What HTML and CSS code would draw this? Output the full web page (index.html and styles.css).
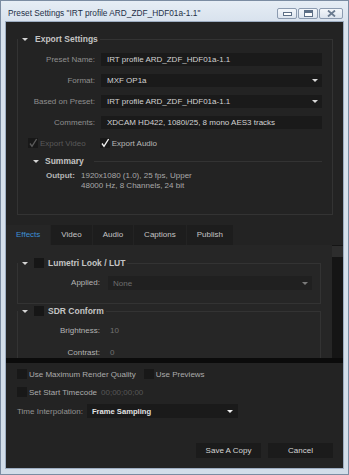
FILE: index.html
```html
<!DOCTYPE html>
<html>
<head>
<meta charset="utf-8">
<title>Preset Settings</title>
<link rel="stylesheet" href="styles.css">
</head>
<body>
<div class="window">
  <div class="titlebar">
    <span class="title">Preset Settings "IRT profile ARD_ZDF_HDF01a-1.1"</span>
    <div class="caption-buttons">
      <span class="cbtn cmin"><svg width="9" height="5" viewBox="0 0 9 5"><rect x="0.5" y="1.5" width="8" height="3" fill="#fdfdfd" stroke="#5d6f86"/></svg></span>
      <span class="cbtn cmax"><svg width="9" height="7" viewBox="0 0 9 7"><rect x="0.5" y="0.5" width="8" height="6" fill="#fdfdfd" stroke="#5d6f86"/><rect x="1" y="1" width="7" height="2" fill="#5d6f86"/></svg></span>
      <span class="cbtn cclose"><svg width="9" height="7" viewBox="0 0 9 7"><path d="M1 0.5 L8 6.5 M8 0.5 L1 6.5" stroke="#6a7b90" stroke-width="1.8"/></svg></span>
    </div>
  </div>

  <div class="client">
    <fieldset class="group export">
      <legend class="legend"><span class="tri"></span><span class="gtitle">Export Settings</span></legend>
      <div class="form">
        <span class="lbl">Preset Name:</span>
        <div class="field">IRT profile ARD_ZDF_HDF01a-1.1</div>
        <span class="lbl">Format:</span>
        <div class="field select"><span>MXF OP1a</span><span class="dd"></span></div>
        <span class="lbl">Based on Preset:</span>
        <div class="field select"><span>IRT profile ARD_ZDF_HDF01a-1.1</span><span class="dd"></span></div>
        <span class="lbl">Comments:</span>
        <div class="field">XDCAM HD422, 1080i/25, 8 mono AES3 tracks</div>
      </div>
      <div class="checks">
        <span class="cb"><svg width="10" height="10" viewBox="0 0 10 10"><path d="M2 5.5 L4 8.3 L8.6 1" fill="none" stroke="#5a5a5a" stroke-width="1.4"/></svg></span>
        <span class="ctext disabled">Export Video</span>
        <span class="cb cb-audio"><svg width="10" height="10" viewBox="0 0 10 10"><path d="M2 5.5 L4 8.3 L8.6 1" fill="none" stroke="#f0f0f0" stroke-width="1.4"/></svg></span>
        <span class="ctext">Export Audio</span>
      </div>
      <div class="summary-head">
        <span class="tri"></span><span class="gtitle">Summary</span><span class="rule"></span>
      </div>
      <div class="output">
        <span class="olabel">Output:</span>
        <div class="ovalue">1920x1080 (1.0), 25 fps, Upper<br>48000 Hz, 8 Channels, 24 bit</div>
      </div>
    </fieldset>

    <div class="tabs">
      <span class="tab active">Effects</span>
      <span class="tab">Video</span>
      <span class="tab">Audio</span>
      <span class="tab">Captions</span>
      <span class="tab">Publish</span>
    </div>

    <div class="tabbody">
      <div class="scrollarea">
        <fieldset class="group fx">
          <legend class="legend fxlegend"><span class="tri"></span><span class="cb fxcb"></span><span class="gtitle">Lumetri Look / LUT</span></legend>
          <div class="fxform">
            <span class="fxlbl">Applied:</span>
            <div class="fxselect"><span>None</span><span class="dd dim"></span></div>
          </div>
        </fieldset>
        <fieldset class="group fx sdr">
          <legend class="legend fxlegend"><span class="tri"></span><span class="cb fxcb"></span><span class="gtitle">SDR Conform</span></legend>
          <div class="fxform">
            <span class="fxlbl">Brightness:</span>
            <span class="fxval">10</span>
            <span class="fxlbl">Contrast:</span>
            <span class="fxval">0</span>
          </div>
        </fieldset>
      </div>
      <div class="scrollbar"><div class="thumb"></div></div>
    </div>

    <div class="splitter"></div>

    <div class="bottom">
      <div class="opt">
        <span class="cb"></span><span class="otext">Use Maximum Render Quality</span>
        <span class="cb cb-prev"></span><span class="otext">Use Previews</span>
      </div>
      <div class="opt">
        <span class="cb"></span><span class="otext">Set Start Timecode</span>
        <span class="tc">00;00;00;00</span>
      </div>
      <div class="interp">
        <span class="ilabel">Time Interpolation:</span>
        <div class="iselect"><span>Frame Sampling</span><span class="dd"></span></div>
      </div>
      <div class="buttons">
        <span class="btn">Save A Copy</span>
        <span class="btn">Cancel</span>
      </div>
    </div>
  </div>
</div>
</body>
</html>
```

FILE: styles.css
```css
* { box-sizing: border-box; }
html, body { margin: 0; padding: 0; }
body {
  width: 349px;
  height: 475px;
  overflow: hidden;
  font-family: "Liberation Sans", Arial, sans-serif;
  font-size: 8px;
  background: #d5e0ec;
}
.window {
  width: 349px;
  height: 475px;
  border: 1px solid #7b8ca2;
  background: linear-gradient(to bottom, #e6edf5 0, #d8e2ed 21px, #d2dde9 100%);
  display: flex;
  flex-direction: column;
}
.titlebar {
  height: 21px;
  flex: none;
  display: flex;
  align-items: flex-start;
  padding-left: 7px;
}
.title {
  flex: 1;
  margin-top: 6px;
  font-family: "Liberation Sans", Arial, sans-serif;
  font-size: 8.3px;
  line-height: 12px;
  color: #1e3047;
  white-space: nowrap;
}
.caption-buttons {
  display: flex;
  margin-top: 7px;
  margin-right: 5px;
  gap: 1px;
}
.cbtn {
  height: 11px;
  width: 20px;
  border: 1px solid #8c9bb0;
  border-radius: 2px;
  background: linear-gradient(to bottom, #f4f7fb, #dbe3ed);
  display: flex;
  align-items: center;
  justify-content: center;
}
.cclose { width: 24px; }

.client {
  flex: 1;
  margin: 0 5px 6px 5px;
  background: #232323;
  box-shadow: 0 0 0 1px #9dadc1;
  display: flex;
  flex-direction: column;
  padding-top: 11px;
  overflow: hidden;
}

/* group boxes */
.group {
  border: 1px solid #333333;
  margin: 0;
  padding: 0;
  min-width: 0;
}
.export {
  margin: 0 10px 0 11px;
  padding: 0 0 23px 0;
}
.legend {
  padding: 0 2px 0 4px;
  height: 12px;
  line-height: 12px;
  white-space: nowrap;
}
.tri {
  display: inline-block;
  width: 0;
  height: 0;
  border-left: 3px solid transparent;
  border-right: 3px solid transparent;
  border-top: 3px solid #d4d4d4;
  vertical-align: middle;
  margin-right: 7px;
}
.gtitle {
  font-weight: bold;
  font-size: 8.5px;
  color: #c4c4c4;
  vertical-align: middle;
}

.form {
  display: grid;
  grid-template-columns: 77px 221px;
  column-gap: 6px;
  row-gap: 8px;
  margin-top: 8px;
}
.lbl {
  text-align: right;
  color: #8f8f8f;
  line-height: 13px;
  white-space: nowrap;
}
.field {
  height: 13px;
  line-height: 13px;
  background: #1a1a1a;
  color: #d2d2d2;
  padding-left: 6px;
  white-space: nowrap;
}
.select {
  display: flex;
  align-items: center;
  justify-content: space-between;
  padding-right: 4px;
}
.dd {
  width: 0;
  height: 0;
  border-left: 3px solid transparent;
  border-right: 3px solid transparent;
  border-top: 3px solid #d8d8d8;
}
.dd.dim { border-top-color: #7a7a7a; }

.checks {
  display: flex;
  align-items: center;
  height: 12px;
  margin-top: 8px;
  padding-left: 10px;
}
.cb {
  width: 10px;
  height: 10px;
  flex: none;
  background: #181818;
  display: inline-block;
}
.cb svg { display: block; }
.ctext {
  margin-left: 2px;
  color: #b8b8b8;
}
.ctext.disabled { color: #595959; }
.cb-audio { margin-left: 14px; }

.summary-head {
  display: flex;
  align-items: center;
  height: 12px;
  margin-top: 6px;
  padding-left: 15px;
  margin-right: 10px;
}
.summary-head .tri { margin-right: 6px; }
.rule {
  flex: 1;
  height: 1px;
  background: #333333;
  margin-left: 10px;
}
.output {
  display: flex;
  margin-top: 4px;
  padding-left: 28px;
  line-height: 10px;
}
.olabel {
  font-weight: bold;
  color: #b4b4b4;
  width: 35px;
  flex: none;
}
.ovalue { color: #a8a8a8; }

/* tabs */
.tabs {
  display: flex;
  height: 20px;
  margin-top: 10px;
  gap: 1px;
  flex: none;
}
.tab {
  padding: 0 10px;
  line-height: 20px;
  background: #1d1d1d;
  color: #c4c4c4;
  white-space: nowrap;
}
.tab.active {
  background: #262626;
  color: #3d8fd4;
}
.tabbody {
  display: flex;
  height: 113px;
  flex: none;
  background: #262626;
}
.scrollarea {
  flex: 1;
  overflow: hidden;
  padding-top: 12px;
}
.scrollbar {
  width: 11px;
  flex: none;
  background: #151515;
  padding-top: 1px;
}
.thumb {
  height: 11px;
  background: #2d2d2d;
}
.fx {
  margin: 0 11px;
  padding: 0 8px 13px 0;
}
.sdr { margin-top: 1px; }
.fxlegend .tri { margin-right: 6px; vertical-align: middle; }
.fxcb {
  vertical-align: middle;
  margin-right: 4px;
  background: #161616;
}
.fxform {
  display: grid;
  grid-template-columns: 82px 1fr;
  column-gap: 8px;
  row-gap: 8px;
  margin-top: 7px;
}
.fxlbl {
  text-align: right;
  color: #b4b4b4;
  line-height: 14px;
  white-space: nowrap;
}
.fxselect {
  height: 14px;
  background: #202020;
  color: #6e6e6e;
  display: flex;
  align-items: center;
  justify-content: space-between;
  padding: 0 4px 0 5px;
}
.fxval {
  line-height: 14px;
  color: #727272;
  padding-left: 2px;
}

.splitter {
  height: 5px;
  flex: none;
  background: #0b0b0b;
}

/* bottom options */
.bottom {
  padding: 5px 10px 0 11px;
  display: flex;
  flex-direction: column;
}
.opt {
  display: flex;
  align-items: center;
  height: 12px;
  margin-bottom: 6px;
}
.otext {
  margin-left: 2px;
  color: #ababab;
  white-space: nowrap;
}
.cb-prev { margin-left: 8px; }
.tc {
  margin-left: 4px;
  color: #575757;
}
.interp {
  display: flex;
  align-items: center;
  height: 14px;
}
.ilabel {
  color: #939393;
  white-space: nowrap;
}
.iselect {
  margin-left: 4px;
  width: 151px;
  height: 14px;
  background: #1a1a1a;
  color: #e2e2e2;
  font-weight: bold;
  font-size: 7.6px;
  display: flex;
  align-items: center;
  justify-content: space-between;
  padding: 0 5px 0 5px;
}
.iselect .dd { border-top-color: #eeeeee; }
.buttons {
  display: flex;
  justify-content: flex-end;
  gap: 7px;
  margin-top: 25px;
}
.btn {
  width: 65px;
  height: 15px;
  line-height: 15px;
  text-align: center;
  background: #1b1b1b;
  color: #d6d6d6;
}
```
